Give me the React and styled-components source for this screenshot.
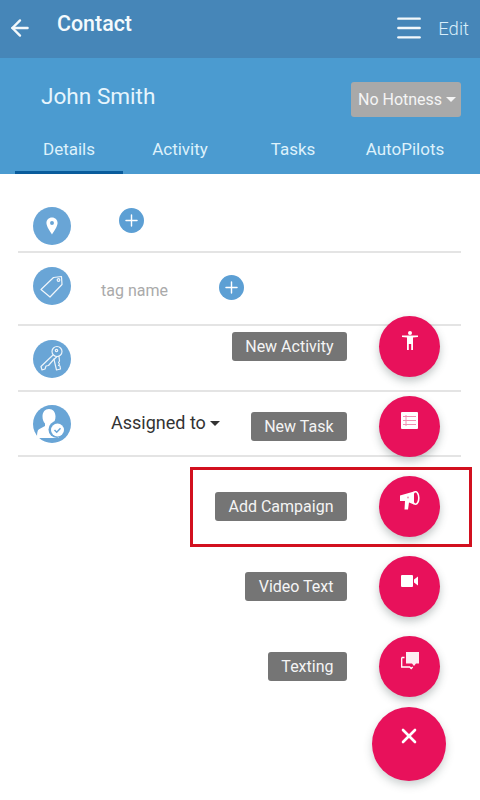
import React from "react";
import styled, { createGlobalStyle } from "styled-components";
import { ArrowLeft, Menu, Plus, X } from "lucide-react";

const Global = createGlobalStyle`
  html, body { margin: 0; padding: 0; background: #fff; }
  body { font-family: Roboto, "Liberation Sans", sans-serif; }
`;

const Page = styled.div`
  position: relative;
  width: 480px;
  height: 800px;
  overflow: hidden;
  background: #fff;
`;
const TopBar = styled.header`
  height: 58px;
  background: #4686b8;
  display: flex;
  align-items: flex-start;
  color: #fff;
`;
const BackButton = styled.div`
  width: 57px;
  padding: 15px 0 0 7px;
  box-sizing: border-box;
  display: flex;
  color: #f2f8fb;
`;
const Title = styled.h1`
  margin: 11px 0 0;
  font-size: 21.4px;
  line-height: 26px;
  font-weight: 500;
  flex: 1;
  color: #f4fafd;
`;
const MenuButton = styled.div`
  padding: 12px 0 0;
  display: flex;
  color: #f2f8fb;
`;
const EditLink = styled.span`
  margin: 17px 11px 0 13px;
  font-size: 18.5px;
  line-height: 24px;
  font-weight: 300;
  color: #d8eefa;
`;
const ContactHeader = styled.section`
  height: 116px;
  background: #4b9bd0;
  display: flex;
  flex-direction: column;
`;
const NameRow = styled.div`
  height: 68px;
  display: flex;
  justify-content: space-between;
  padding: 24px 19px 0 41px;
  box-sizing: border-box;
`;
const Name = styled.div`
  font-size: 22.6px;
  line-height: 30px;
  font-weight: 400;
  color: #e6f5fd;
`;
const HotnessButton = styled.div`
  width: 110px;
  height: 35px;
  padding-left: 7px;
  box-sizing: border-box;
  display: flex;
  align-items: center;
  gap: 4px;
  border-radius: 3px;
  background: #a9a9a9;
  color: #f5f5f5;
  font-size: 16px;
`;
const Caret = styled.span`
  display: inline-block;
  width: 0;
  height: 0;
  border-left: ${(p) => p.$size}px solid transparent;
  border-right: ${(p) => p.$size}px solid transparent;
  border-top: ${(p) => p.$size}px solid ${(p) => p.$color};
`;
const Tabs = styled.nav`
  display: flex;
  height: 48px;
  padding-left: 15px;
`;
const Tab = styled.div`
  width: ${(p) => p.$width}px;
  box-sizing: border-box;
  padding-top: 13px;
  text-align: center;
  font-size: 17px;
  line-height: 20px;
  color: #ddf1fb;
  border-bottom: 3px solid ${(p) => (p.$active ? "#0a5c9c" : "transparent")};
  height: 48px;
`;
const Details = styled.section`
  padding: 0 19px 0 18px;
`;
const Row = styled.div`
  height: ${(p) => p.$height}px;
  box-sizing: border-box;
  padding: ${(p) => p.$top}px 0 0 15px;
  border-bottom: 2px solid #e4e4e4;
  display: flex;
  align-items: flex-start;
`;
const RoundIcon = styled.div`
  width: 38px;
  height: 38px;
  border-radius: 50%;
  flex: none;
  background: #69a5d6;
  display: flex;
  align-items: center;
  justify-content: center;
`;
const AddButton = styled.div`
  width: 25px;
  height: 25px;
  border-radius: 50%;
  background: #5c9fd4;
  color: #fff;
  display: flex;
  align-items: center;
  justify-content: center;
  margin: ${(p) => p.$margin};
  flex: none;
`;
const TagName = styled.span`
  margin: 14px 0 0 30px;
  font-size: 16px;
  line-height: 20px;
  color: #aaa;
  width: 68px;
`;
const Assigned = styled.div`
  margin: 6px 0 0 40px;
  display: flex;
  align-items: center;
  gap: 4px;
  font-size: 18px;
  line-height: 24px;
  color: #333;
`;
const FabStack = styled.div`
  position: absolute;
  top: 316px;
  right: 40px;
  display: flex;
  flex-direction: column;
  align-items: flex-end;
  gap: 19px;
`;
const FabRow = styled.div`
  display: flex;
  align-items: center;
  gap: 32px;
`;
const FabLabel = styled.span`
  height: 29px;
  padding: 0 13.5px;
  margin-top: -1px;
  display: flex;
  align-items: center;
  border-radius: 3px;
  background: #757575;
  color: #f4f4f4;
  font-size: 16px;
`;
const Fab = styled.div`
  width: 61px;
  height: 61px;
  box-sizing: border-box;
  padding-bottom: 12px;
  border-radius: 50%;
  background: #e8115b;
  box-shadow: 0 4px 8px rgba(50, 70, 70, 0.3);
  display: flex;
  align-items: center;
  justify-content: center;
  color: #fff;
`;
const CloseFab = styled.div`
  position: absolute;
  left: 372px;
  top: 707px;
  width: 74px;
  height: 74px;
  box-sizing: border-box;
  padding-bottom: 16px;
  border-radius: 50%;
  background: #e8115b;
  box-shadow: 0 4px 8px rgba(50, 70, 70, 0.25);
  display: flex;
  align-items: center;
  justify-content: center;
  color: #fff;
`;
const Highlight = styled.div`
  position: absolute;
  left: 190px;
  top: 467px;
  width: 282px;
  height: 80px;
  box-sizing: border-box;
  border: 3px solid #d2101f;
  pointer-events: none;
`;

const PinIcon = () => (
  <svg width="12" height="18" viewBox="0 0 14 20">
    <path fill="#fff" fillRule="evenodd" d="M7 0C3.200 0 .5 2.800.5 6.500.5 10.500 5 16.500 7 20c2-3.500 6.500-9.500 6.500-13.500C13.500 2.800 10.800 0 7 0zm0 4.300a2.300 2.300 0 1 1 0 4.600 2.300 2.300 0 0 1 0-4.600z" />
  </svg>
);
const TagIcon = () => (
  <svg width="26" height="26" viewBox="0 0 26 26" fill="none" stroke="#fff" strokeWidth="1.200" strokeLinejoin="round" opacity="0.9">
    <path d="M2 16.500 14.500 4.500l8-1 .5 8L11 24z" />
    <circle cx="19.500" cy="7" r="1.300" />
  </svg>
);
const KeysIcon = () => (
  <svg width="30" height="30" viewBox="0 0 30 30" fill="none" stroke="#fff" strokeWidth="1.200" strokeLinejoin="round" opacity="0.88">
    <circle cx="20" cy="7.500" r="5" />
    <circle cx="19.500" cy="6.500" r="1.200" />
    <path d="M16 11 4 22.500l1 3.500 3-1 1-3 2.500-.5 6-7" />
    <path d="M20 12.500l-3 3 2.500 10.500 4-1-.5-3-1.500-.5 1-1.500-1-1.500 1-1.500-.5-4.500z" />
  </svg>
);
const UserCheckIcon = () => (
  <svg width="38" height="38" viewBox="0 0 38 38">
    <path fill="#fff" d="M16 4c-4 0-6.500 3-6.500 7.500 0 3 1 5.500 2.500 7v2.500l-6 3.200C4.300 25.200 4 28 4 33h22v-5l-4-5-2-2v-2.500c1.500-1.500 2.500-4 2.500-7C22.500 7 20 4 16 4z" />
    <circle cx="24" cy="24.500" r="8.500" fill="#69a5d6" />
    <circle cx="24.500" cy="25" r="6.500" fill="#fff" />
    <path d="M21.500 25l2.200 2.200 3.800-4" fill="none" stroke="#69a5d6" strokeWidth="1.500" />
  </svg>
);
const PersonIcon = () => (
  <svg width="16" height="19" viewBox="0 0 16 19" fill="#fff">
    <circle cx="8" cy="2" r="2" />
    <path d="M0 4.500h16V6l-5 .6V19H9.200v-6H6.800v6H5V6.600L0 6z" />
  </svg>
);
const ListIcon = () => (
  <svg width="17" height="17" viewBox="0 0 17 17">
    <rect width="17" height="17" rx="1" fill="#fff" />
    <path d="M2 4.500h13M2 8.500h13M2 12.500h13M5 3v11" stroke="#f290b2" strokeWidth="1" fill="none" />
  </svg>
);
const MegaphoneIcon = () => (
  <svg width="20" height="20" viewBox="0 0 20 20" fill="#fff">
    <path d="M0 4.500 14 .5v13L9 11.500 8 18.500H4.500L5 10H0z" />
    <ellipse cx="15.500" cy="7" rx="3.300" ry="6.300" fill="none" stroke="#fff" strokeWidth="1.600" />
    <circle cx="8" cy="6.500" r="1" fill="#f290b2" />
  </svg>
);
const VideoIcon = () => (
  <svg width="17" height="12" viewBox="0 0 17 12" fill="#fff">
    <rect width="12" height="12" rx="1" />
    <path d="M13 4.500 17 1.500v9L13 7.500z" />
  </svg>
);
const ChatIcon = () => (
  <svg width="18" height="18" viewBox="0 0 18 18" fill="#fff">
    <path d="M5 0h13v11.500h-3l-2 2.500-2-2.500H5z" opacity="0.92" />
    <path d="M.7 5.500h2.800M.7 5.500v9.500h8l1.500 1.500 1.500-1.500" fill="none" stroke="#fff" strokeWidth="1.300" />
  </svg>
);

const actions = [
  ["New Activity", <PersonIcon key="a" />],
  ["New Task", <ListIcon key="t" />],
  ["Add Campaign", <MegaphoneIcon key="c" />],
  ["Video Text", <VideoIcon key="v" />],
  ["Texting", <ChatIcon key="x" />],
];

export default function App() {
  return (
    <Page>
      <Global />
      <TopBar>
        <BackButton><ArrowLeft size={26} strokeWidth={2.2} /></BackButton>
        <Title>Contact</Title>
        <MenuButton><Menu size={32} strokeWidth={1.8} /></MenuButton>
        <EditLink>Edit</EditLink>
      </TopBar>
      <ContactHeader>
        <NameRow>
          <Name>John Smith</Name>
          <HotnessButton>No Hotness <Caret $size={5} $color="#f5f5f5" /></HotnessButton>
        </NameRow>
        <Tabs>
          <Tab $width={108} $active>Details</Tab>
          <Tab $width={114}>Activity</Tab>
          <Tab $width={112}>Tasks</Tab>
          <Tab $width={112}>AutoPilots</Tab>
        </Tabs>
      </ContactHeader>
      <Details>
        <Row $height={79} $top={33}>
          <RoundIcon><PinIcon /></RoundIcon>
          <AddButton $margin="1px 0 0 48px"><Plus size={19} strokeWidth={1.8} /></AddButton>
        </Row>
        <Row $height={73} $top={14}>
          <RoundIcon><TagIcon /></RoundIcon>
          <TagName>tag name</TagName>
          <AddButton $margin="8px 0 0 50px"><Plus size={19} strokeWidth={1.8} /></AddButton>
        </Row>
        <Row $height={66} $top={14}>
          <RoundIcon><KeysIcon /></RoundIcon>
        </Row>
        <Row $height={65} $top={13}>
          <RoundIcon><UserCheckIcon /></RoundIcon>
          <Assigned>Assigned to <Caret $size={5.500} $color="#333" /></Assigned>
        </Row>
      </Details>
      <FabStack>
        {actions.map(([label, icon]) => (
          <FabRow key={label}>
            <FabLabel>{label}</FabLabel>
            <Fab>{icon}</Fab>
          </FabRow>
        ))}
      </FabStack>
      <CloseFab><X size={24} strokeWidth={2.6} /></CloseFab>
      <Highlight />
    </Page>
  );
}
